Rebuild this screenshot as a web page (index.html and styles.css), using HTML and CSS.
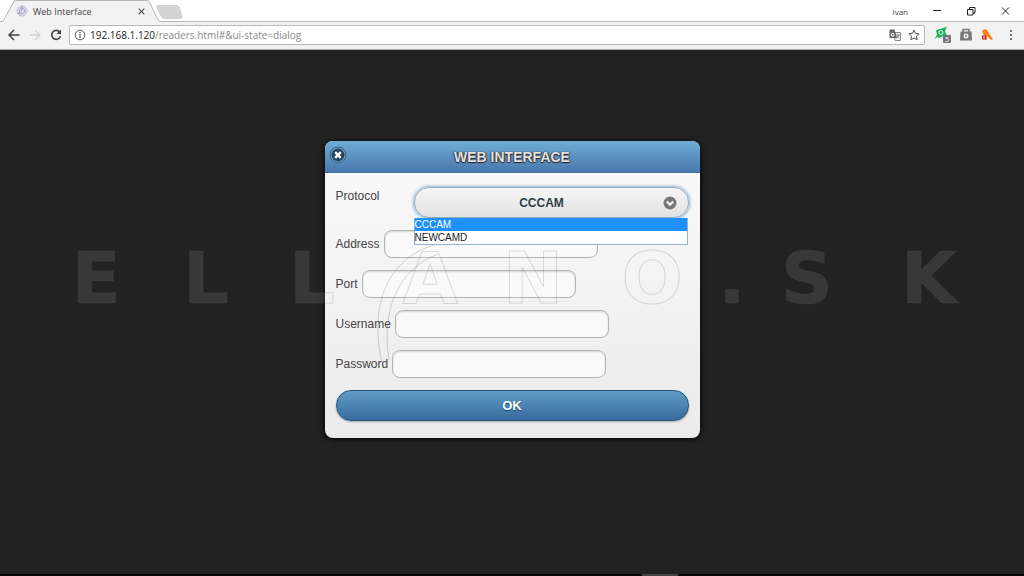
FILE: index.html
```html
<!DOCTYPE html>
<html lang="en">
<head>
<meta charset="utf-8">
<meta name="viewport" content="width=device-width, initial-scale=1">
<title>Web Interface</title>
<link rel="stylesheet" href="styles.css">
</head>
<body>
<header class="browser">
  <div class="tabstrip">
    <svg class="tab-shapes" width="190" height="22" viewBox="0 0 190 22" aria-hidden="true">
      <path d="M0 22 L4 21 L13 3 Q14 1 16 1 H147 Q149 1 150 3 L158 20 L162 22Z" fill="#f2f2f2"/>
      <path d="M0 21.500 H3 L13 3 Q14 .5 16 .5 H147 Q149 .5 150 3 L158 20 Q159 21.500 161 21.500 H190" fill="none" stroke="#b5b5b5"/>
      <path d="M158 5.500 H176 Q178 5.500 179 7 L182 16 Q183 18.500 180 18.500 H164 Q162 18.500 161 16 L157 8 Q156 5.500 158 5.500Z" fill="#d4d4d4" stroke="#d0d0d0"/>
    </svg>
    <div class="tab">
      <svg width="12" height="12" viewBox="0 0 12 12" aria-hidden="true"><circle cx="6" cy="6" r="5" fill="#d8d3e6" stroke="#b3adc9" stroke-dasharray="2 1"/><circle cx="6" cy="6" r="2.500" fill="#f3f1f8" stroke="#a49dc0"/><path d="M6 1v5L2 9" fill="none" stroke="#a49dc0"/></svg>
      <span class="tab-title">Web Interface</span>
      <button class="plain" aria-label="Close tab"><svg width="7" height="7" viewBox="0 0 7 7"><path d="M.7.700l5.600 5.600M6.300.700L.7 6.300" stroke="#555" stroke-width="1.200"/></svg></button>
    </div>
    <div class="window-controls">
      <button class="plain profile">Ivan</button>
      <button class="plain" aria-label="Minimize"><svg width="9" height="9" viewBox="0 0 9 9"><path d="M0 3.500h8" stroke="#222"/></svg></button>
      <button class="plain" aria-label="Restore"><svg width="9" height="9" viewBox="0 0 9 9"><path d="M.5 2.500h5.500v5.500h-5.500zM2.500 2.500v-2h5.500v5.500H6" fill="none" stroke="#222"/></svg></button>
      <button class="plain" aria-label="Close window"><svg width="9" height="9" viewBox="0 0 9 9"><path d="M1 .5l7 7M8 .5l-7 7" stroke="#222"/></svg></button>
    </div>
  </div>
  <div class="toolbar">
    <button class="plain" aria-label="Back"><svg width="12" height="12" viewBox="0 0 12 12"><path d="M11.500 6H1.500M6 1L1 6l5 5" fill="none" stroke="#444" stroke-width="1.500"/></svg></button>
    <button class="plain" aria-label="Forward"><svg width="12" height="12" viewBox="0 0 12 12"><path d="M.5 6h10M6 1l5 5-5 5" fill="none" stroke="#d0d0d0" stroke-width="1.300"/></svg></button>
    <button class="plain" aria-label="Reload"><svg width="12" height="12" viewBox="0 0 12 12"><path d="M9.700 3A4.500 4.500 0 1 0 10.500 7.300" fill="none" stroke="#444" stroke-width="1.600"/><path d="M11 .5V5H6.500z" fill="#444"/></svg></button>
    <div class="omnibox">
      <svg width="12" height="12" viewBox="0 0 12 12" aria-hidden="true"><circle cx="6" cy="6" r="4.800" fill="none" stroke="#555"/><path d="M6 5v4M6 3v1.200" stroke="#555" stroke-width="1.200"/></svg>
      <span class="url">192.168.1.120<span class="path">/readers.html#&amp;ui-state=dialog</span></span>
      <button class="plain" aria-label="Translate"><svg width="12" height="12" viewBox="0 0 12 12"><path d="M5 3.500h6.500v8H6z" fill="#f5f5f5" stroke="#888"/><path d="M.5.500h5L8 9H.5z" fill="#666"/><path d="M5 4.500H2.500v2.500h2.500V6H4" fill="none" stroke="#fff"/><path d="M7 6h4M9 5v1M10 6L7.500 9.500M8 7l2 2" stroke="#777" fill="none" stroke-width=".8"/></svg></button>
      <button class="plain" aria-label="Bookmark"><svg width="12" height="12" viewBox="0 0 12 12"><path d="M6 1l1.500 3.400 3.600.400-2.700 2.400.800 3.600L6 9 2.800 10.800l.800-3.600L.9 4.800l3.600-.400z" fill="none" stroke="#555"/></svg></button>
    </div>
    <div class="extensions">
      <button class="plain" aria-label="Extension, 5 items"><svg width="18" height="18" viewBox="0 0 18 18"><path d="M1 12l2-3-1-5 4-1 6-2-1 5 2 3-4 1-3 2-3-1z" fill="#22b45a"/><circle cx="7" cy="6.500" r="2" fill="#22b45a" stroke="#e8fff0"/><path d="M1 12.500l3-3M12.500 1L9 5" stroke="#169747"/><rect x="9" y="9" width="8" height="8" rx="1" fill="#6f777c"/><text x="13" y="16" class="badge">5</text></svg></button>
      <button class="plain" aria-label="Locked extension"><svg width="14" height="14" viewBox="0 0 14 14"><path d="M4 4V1.500h6V4" fill="none" stroke="#777" stroke-width="1.500"/><path d="M1.500 3.500h11l.5 9H1z" fill="#777"/><circle cx="7" cy="8" r="2.500" fill="#eee"/><circle cx="7" cy="8" r="1" fill="#777"/></svg></button>
      <button class="plain" aria-label="Antivirus extension"><svg width="14" height="14" viewBox="0 0 14 14"><path d="M2 3Q4 0 7 2l3 5 3 4-2 1-4-4 0 4-4-1 2-3-2-2z" fill="#ff7f17"/><path d="M2 7.500h4v4H2z" fill="#c92a2a"/><path d="M4 8.500v2" stroke="#fff"/></svg></button>
      <button class="plain" aria-label="Menu"><svg width="4" height="12" viewBox="0 0 4 12"><g fill="#555"><circle cx="2" cy="2" r="1.100"/><circle cx="2" cy="6" r="1.100"/><circle cx="2" cy="10" r="1.100"/></g></svg></button>
    </div>
  </div>
</header>

<main class="page">
  <form class="dialog" role="dialog" aria-labelledby="dialog-title">
    <div class="dialog-header">
      <button type="button" class="close" aria-label="Close"><svg width="18" height="18" viewBox="0 0 18 18"><circle cx="9" cy="9" r="8" fill="#6ba3cb" stroke="#2f648c"/><circle cx="9" cy="9" r="6.500" fill="#29465c"/><path d="M6.200 6.200l5.600 5.600M11.800 6.200l-5.600 5.600" stroke="#fff" stroke-width="2.400"/></svg></button>
      <h1 id="dialog-title">WEB INTERFACE</h1>
    </div>
    <div class="dialog-body">
      <div class="protocol">
        <label for="protocol">Protocol</label>
        <div class="select-wrap">
          <select id="protocol"><option>CCCAM</option><option>NEWCAMD</option></select>
          <svg class="chevron" width="14" height="14" viewBox="0 0 14 14" aria-hidden="true"><circle cx="7" cy="7" r="6.500" fill="#777"/><path d="M3.800 5.500L7 8.800l3.200-3.300" fill="none" stroke="#fff" stroke-width="2"/></svg>
          <ul class="options" role="listbox" aria-label="Protocol">
            <li role="option" class="active" aria-selected="true">CCCAM</li>
            <li role="option" aria-selected="false">NEWCAMD</li>
          </ul>
        </div>
      </div>
      <div class="field"><label for="address">Address</label><input id="address" type="text"></div>
      <div class="field"><label for="port">Port</label><input id="port" type="text"></div>
      <div class="field"><label for="username">Username</label><input id="username" type="text"></div>
      <div class="field"><label for="password">Password</label><input id="password" type="password"></div>
      <button type="submit" class="ok">OK</button>
    </div>
  </form>
  <svg class="watermark" viewBox="0 0 1024 140" role="img" aria-label="ELLANO.SK">
    <text y="68" x="96 206 312 430 533 652 732 807 929">ELLANO.SK</text>
    <path d="M383 132C368 72 386 22 438 9M389 125C381 75 398 34 438 19"/>
  </svg>
</main>
<footer class="taskbar"></footer>
</body>
</html>
```
FILE: styles.css
```css
* {
  box-sizing: border-box;
}

body {
  margin: 0;
  min-height: 100vh;
  display: flex;
  flex-direction: column;
  background: #222;
  font-family: "Liberation Sans", Arial, sans-serif;
  font-size: 12px;
  color: #444;
}

svg {
  display: block;
  flex: none;
}

.plain {
  padding: 0;
  border: 0;
  background: none;
  font: inherit;
  color: inherit;
}

.browser {
  font-family: "Open Sans", "Noto Sans", sans-serif;
  background: #f2f2f2;
  border-bottom: 1px solid #aaa;
}

.tabstrip {
  position: relative;
  display: flex;
  justify-content: space-between;
  height: 22px;
  background: linear-gradient(#b5b5b5, #b5b5b5) 190px 100% / 100% 1px no-repeat #fff;
}

.tab-shapes {
  position: absolute;
  left: 0;
  top: 0;
}

.tab {
  position: relative;
  display: flex;
  align-items: center;
  gap: 5px;
  width: 145px;
  padding-left: 16px;
  font-size: 9px;
}

.tab-title {
  flex: 1;
}

.window-controls {
  display: flex;
  align-items: center;
  gap: 25px;
  padding-right: 14px;
}

.profile {
  font-size: 8px;
}

.toolbar {
  display: flex;
  align-items: center;
  gap: 9px;
  height: 27px;
  padding: 0 11px 1px 8px;
}

.omnibox {
  flex: 1;
  display: flex;
  align-items: center;
  gap: 7px;
  height: 20px;
  margin-left: -2px;
  padding: 0 4px;
  border: 1px solid #b8b8b8;
  border-radius: 2px;
  background: #fff;
}

.url {
  flex: 1;
  margin-left: -3px;
  font-size: 10px;
  color: #222;
  white-space: nowrap;
}

.path {
  color: #888;
}

.extensions {
  display: flex;
  align-items: center;
  gap: 7px;
}

.extensions button:last-child {
  margin-left: 8px;
}

.badge {
  font-size: 7px;
  fill: #fff;
  text-anchor: middle;
}

.page {
  position: relative;
  flex: 1;
  padding: 91px 16px 32px;
}

.dialog {
  width: 100%;
  max-width: 375px;
  margin: 0 auto;
  border-radius: 8px;
  background: linear-gradient(#fafafa, #ebebec);
  box-shadow: 0 1px 6px #000;
}

.dialog-header {
  display: flex;
  align-items: center;
  height: 32px;
  padding: 0 22px 4px 4px;
  border-bottom: 1px solid #456f9a;
  border-radius: 8px 8px 0 0;
  background: linear-gradient(#6facd5, #4978ae);
}

.close {
  padding: 0;
  border: 0;
  background: none;
}

.dialog-header h1 {
  flex: 1;
  margin: 0;
  padding-top: 4px;
  text-align: center;
  font-size: 14px;
  line-height: 20px;
  color: #e2e2e2;
  text-shadow: 0 1px 1px #222, 1px 0 1px #333, -1px 0 1px #555;
}

.dialog-body {
  padding: 14px 11px 17px;
}

.protocol {
  display: flex;
  margin-bottom: 12px;
}

.protocol label {
  width: 78px;
  padding-top: 2px;
}

.select-wrap {
  position: relative;
  flex: 1;
}

.protocol select {
  appearance: none;
  display: block;
  width: 100%;
  height: 31px;
  padding: 0 27px 0 8px;
  border: 1px solid #9aabb8;
  border-radius: 15px;
  background: linear-gradient(#f6f6f6, #e2e2e2);
  box-shadow: 0 0 3px 1px #8bb5d5;
  font: bold 12px "Liberation Sans", Arial, sans-serif;
  color: #2f3e46;
  text-align-last: center;
}

.chevron {
  position: absolute;
  right: 12px;
  top: 9px;
}

.options {
  position: absolute;
  z-index: 2;
  top: 31px;
  left: 0;
  right: 1px;
  margin: 0;
  padding: 0;
  list-style: none;
  border: 1px solid #8fb5d6;
  border-top: 0;
  background: #fff;
  font-size: 10px;
  line-height: 13px;
  color: #222;
}

.options .active {
  background: #1e90ff;
  color: #fff;
}

.field {
  display: flex;
  align-items: center;
  gap: 4px;
  margin-bottom: 12px;
}

.field label {
  line-height: 28px;
}

.field input {
  width: 214px;
  height: 28px;
  padding: 4px 8px;
  border: 1px solid #b4b4b4;
  border-radius: 8px;
  background: #fafafa;
  box-shadow: inset 0 1px 2px rgba(0, 0, 0, 0.15);
}

.ok {
  display: block;
  width: 100%;
  height: 31px;
  border: 1px solid #245580;
  border-radius: 15px;
  background: linear-gradient(#5f9cc5, #396b9e);
  box-shadow: 0 1px 2px rgba(0, 0, 0, 0.3);
  font: bold 13px "Liberation Sans", Arial, sans-serif;
  color: #fff;
  text-shadow: 0 1px 1px #194b7e;
}

.watermark {
  position: absolute;
  top: 185px;
  left: 0;
  width: 100%;
  pointer-events: none;
}

.watermark text {
  font: bold 72px "DejaVu Sans", sans-serif;
  text-anchor: middle;
  fill: rgba(255, 255, 255, 0.1);
  stroke: rgba(90, 90, 90, 0.2);
}

.watermark path {
  fill: none;
  stroke: rgba(90, 90, 90, 0.25);
}

.taskbar {
  height: 2px;
  background: linear-gradient(#444, #444) 65% 0 / 36px 2px no-repeat #050505;
}
```
